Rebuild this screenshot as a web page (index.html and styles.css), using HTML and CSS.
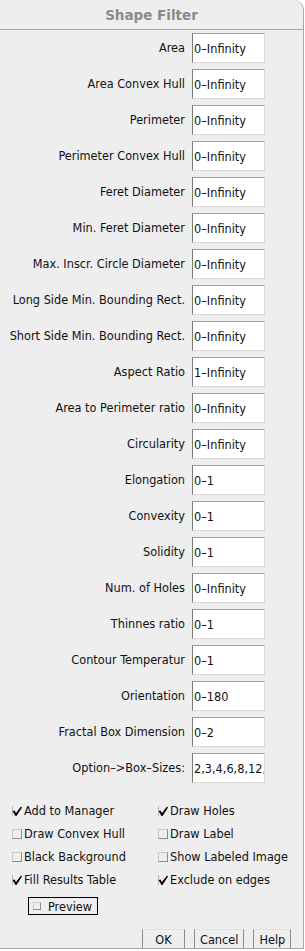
FILE: index.html
```html
<!DOCTYPE html>
<html lang="en">
<head>
<meta charset="utf-8">
<title>Shape Filter</title>
<link rel="stylesheet" href="styles.css">
</head>
<body>
<div class="window">
	<div class="titlebar">Shape Filter</div>

	<div class="fields">
		<label>Area</label><input type="text" value="0&#8211;Infinity">
		<label>Area Convex Hull</label><input type="text" value="0&#8211;Infinity">
		<label>Perimeter</label><input type="text" value="0&#8211;Infinity">
		<label>Perimeter Convex Hull</label><input type="text" value="0&#8211;Infinity">
		<label>Feret Diameter</label><input type="text" value="0&#8211;Infinity">
		<label>Min. Feret Diameter</label><input type="text" value="0&#8211;Infinity">
		<label>Max. Inscr. Circle Diameter</label><input type="text" value="0&#8211;Infinity">
		<label>Long Side Min. Bounding Rect.</label><input type="text" value="0&#8211;Infinity">
		<label>Short Side Min. Bounding Rect.</label><input type="text" value="0&#8211;Infinity">
		<label>Aspect Ratio</label><input type="text" value="1&#8211;Infinity">
		<label>Area to Perimeter ratio</label><input type="text" value="0&#8211;Infinity">
		<label>Circularity</label><input type="text" value="0&#8211;Infinity">
		<label>Elongation</label><input type="text" value="0&#8211;1">
		<label>Convexity</label><input type="text" value="0&#8211;1">
		<label>Solidity</label><input type="text" value="0&#8211;1">
		<label>Num. of Holes</label><input type="text" value="0&#8211;Infinity">
		<label>Thinnes ratio</label><input type="text" value="0&#8211;1">
		<label>Contour Temperatur</label><input type="text" value="0&#8211;1">
		<label>Orientation</label><input type="text" value="0&#8211;180">
		<label>Fractal Box Dimension</label><input type="text" value="0&#8211;2">
		<label>Option&#8211;&gt;Box&#8211;Sizes:</label><input type="text" value="2,3,4,6,8,12,16">
	</div>

	<div class="checks">
		<div class="check on">Add to Manager</div>
		<div class="check on">Draw Holes</div>
		<div class="check">Draw Convex Hull</div>
		<div class="check">Draw Label</div>
		<div class="check">Black Background</div>
		<div class="check">Show Labeled Image</div>
		<div class="check on">Fill Results Table</div>
		<div class="check on">Exclude on edges</div>
	</div>

	<div class="preview"><span class="box"></span>Preview</div>

	<div class="buttons">
		<div class="btn ok">OK</div>
		<div class="btn">Cancel</div>
		<div class="btn">Help</div>
	</div>
</div>
</body>
</html>
```

FILE: styles.css
```css
body
{
	margin:0;
	background:#ffffff;
	font-family:"DejaVu Sans Condensed","DejaVu Sans",sans-serif;
	font-stretch:condensed;
	font-size:12.6px;
	color:#111111;
}
.window
{
	width:303px;
	height:948px;
	background:#eeeeee;
	border-right:1px solid #a8a8a8;
	border-bottom:1px solid #a8a8a8;
	border-top-right-radius:10px;
	display:flex;
	flex-direction:column;
}
.titlebar
{
	height:29px;
	border-bottom:1px solid #a6a6a6;
	text-align:center;
	line-height:30px;
	font-family:"DejaVu Sans",sans-serif;
	font-stretch:normal;
	font-weight:bold;
	font-size:13.5px;
	color:#8a8a8a;
}
.fields
{
	display:grid;
	grid-template-columns:185px 73px;
	column-gap:7px;
	row-gap:6px;
	padding-top:3px;
}
.fields label
{
	text-align:right;
	line-height:30px;
	white-space:nowrap;
}
.fields input
{
	box-sizing:border-box;
	height:30px;
	width:73px;
	margin:0;
	padding:0 0 0 1px;
	background:#ffffff;
	border:1px solid #d8d8d8;
	border-left-color:#7a7a7a;
	border-top-color:#a0a0a0;
	font:inherit;
	color:#111111;
	outline:none;
}
.checks
{
	display:grid;
	grid-template-columns:146px 150px;
	grid-auto-rows:23px;
	padding:16px 0 0 12px;
}
.check
{
	display:flex;
	align-items:center;
	white-space:nowrap;
}
.check::before, .box
{
	content:"";
	display:inline-block;
	box-sizing:border-box;
	width:10px;
	height:10px;
	margin-right:2px;
	border:1px solid #c8c8c8;
	border-right-color:#8c8c8c;
	border-bottom-color:#8c8c8c;
}
.check.on::before
{
	border:none;
	background:url("data:image/svg+xml;utf8,<svg xmlns='http://www.w3.org/2000/svg' viewBox='0 0 10 10'><rect x='0' y='0' width='1' height='10' fill='%23b8b8b8'/><path d='M0.5 5 L2.5 4.5 L4 7 L9 0.5 L10 1.5 L4.5 10 L3.5 10 Z' fill='black'/></svg>") no-repeat;
}
.preview
{
	align-self:flex-start;
	display:flex;
	align-items:center;
	box-sizing:border-box;
	width:70px;
	height:18px;
	margin:6px 0 0 28px;
	border:1px solid #000000;
	padding-left:4px;
}
.preview .box
{
	width:8px;
	height:8px;
	margin-right:7px;
}
.buttons
{
	margin-top:auto;
	display:flex;
	padding-left:142px;
}
.btn
{
	box-sizing:border-box;
	height:19px;
	line-height:19px;
	padding:0 5px;
	border-left:1px solid #8c8c8c;
	border-right:1px solid #8c8c8c;
	border-top:1px solid #e0e0e0;
	margin-right:9px;
}
.btn.ok
{
	width:43px;
	text-align:center;
}
```
